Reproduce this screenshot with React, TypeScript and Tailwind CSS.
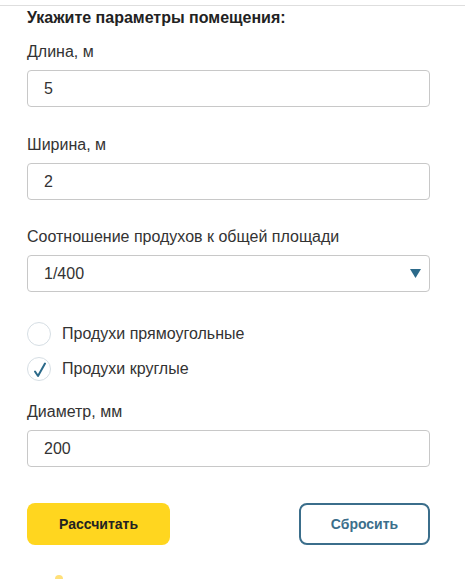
import { useState } from 'react';

const font = { fontFamily: '"Liberation Sans", Arial, sans-serif' };

function Field({ label, value, onChange }: { label: string; value: string; onChange: (v: string) => void }) {
  return (
    <div>
      <label className="block text-[16px] leading-5 text-[#333]">{label}</label>
      <input
        value={value}
        onChange={(e) => onChange(e.target.value)}
        className="mt-2 block h-[37px] w-full rounded-[4px] border border-[#c8c8c8] bg-white px-4 text-[16px] text-[#333] outline-none"
      />
    </div>
  );
}

function Radio({ checked, label, onClick }: { checked: boolean; label: string; onClick: () => void }) {
  return (
    <button type="button" onClick={onClick} className="flex items-center gap-[11px] text-left">
      <span className="relative h-6 w-6 rounded-full border border-[#d6dee4] bg-white">
        {checked && (
          <svg className="absolute left-0 top-0" width="22" height="22" viewBox="0 0 22 22" fill="none">
            <path d="M7 13.5 L10 18 L17 5.5" stroke="#2c6a8a" strokeWidth="2" strokeLinecap="round" strokeLinejoin="round" />
          </svg>
        )}
      </span>
      <span className="text-[16px] leading-5 text-[#333]">{label}</span>
    </button>
  );
}

export default function App() {
  const [length, setLength] = useState('5');
  const [width, setWidth] = useState('2');
  const [ratio, setRatio] = useState('1/400');
  const [shape, setShape] = useState<'rect' | 'round'>('round');
  const [diameter, setDiameter] = useState('200');

  const reset = () => {
    setLength('');
    setWidth('');
    setRatio('1/400');
    setShape('round');
    setDiameter('');
  };

  return (
    <div className="h-[579px] w-[465px] overflow-hidden bg-white" style={font}>
      <div className="mt-[5px] h-px bg-[#dedede]" />
      <div className="px-[27px] pr-[35px]">
        <h2 className="mt-[2px] text-[16px] font-bold leading-5 text-[#222]">Укажите параметры помещения:</h2>

        <div className="mt-[14px]">
          <Field label="Длина, м" value={length} onChange={setLength} />
        </div>
        <div className="mt-[28px]">
          <Field label="Ширина, м" value={width} onChange={setWidth} />
        </div>

        <div className="mt-[27px]">
          <label className="block text-[16px] leading-5 text-[#333]">Соотношение продухов к общей площади</label>
          <div className="relative mt-2">
            <select
              value={ratio}
              onChange={(e) => setRatio(e.target.value)}
              className="block h-[37px] w-full appearance-none rounded-[4px] border border-[#c8c8c8] bg-white px-4 text-[16px] text-[#333] outline-none"
            >
              <option>1/400</option>
              <option>1/300</option>
              <option>1/200</option>
            </select>
            <svg className="pointer-events-none absolute right-[9px] top-[14px]" width="11" height="9" viewBox="0 0 11 9">
              <path d="M0 0 H11 L5.5 9 Z" fill="#2c6a8a" />
            </svg>
          </div>
        </div>

        <div className="mt-[30px] flex flex-col gap-[11px]">
          <Radio checked={shape === 'rect'} label="Продухи прямоугольные" onClick={() => setShape('rect')} />
          <Radio checked={shape === 'round'} label="Продухи круглые" onClick={() => setShape('round')} />
        </div>

        <div className="mt-[21px]">
          <Field label="Диаметр, мм" value={diameter} onChange={setDiameter} />
        </div>

        <div className="mt-[36px] flex items-center justify-between">
          <button type="button" className="h-[42px] w-[143px] rounded-[8px] bg-[#ffd61f] text-[14px] font-bold text-[#222]">
            Рассчитать
          </button>
          <button
            type="button"
            onClick={reset}
            className="h-[42px] w-[131px] rounded-[8px] border-2 border-[#3b6e8b] bg-white text-[14px] font-bold text-[#3b6e8b]"
          >
            Сбросить
          </button>
        </div>

        <div className="ml-[28px] mt-[30px] h-2 w-2 rounded-full bg-[#ffe07a]" />
      </div>
    </div>
  );
}
